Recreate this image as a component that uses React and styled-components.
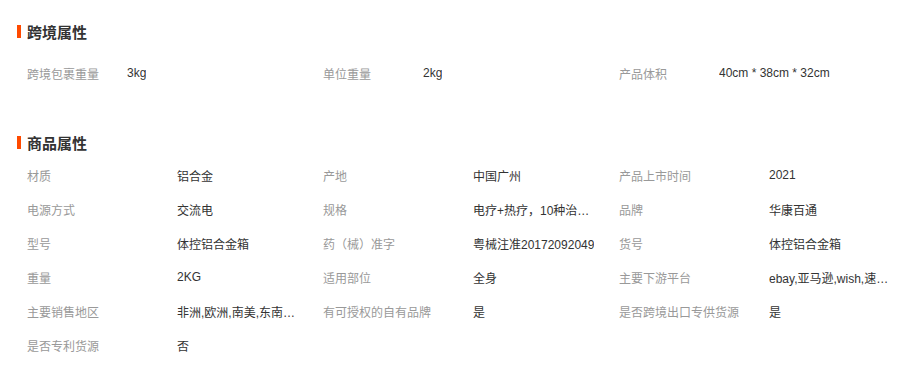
import React from 'react';
import styled, { createGlobalStyle } from 'styled-components';

const crossBorder = [
  ['跨境包裹重量', '3kg'],
  ['单位重量', '2kg'],
  ['产品体积', '40cm * 38cm * 32cm'],
];

const goods = [
  ['材质', '铝合金'],
  ['产地', '中国广州'],
  ['产品上市时间', '2021'],
  ['电源方式', '交流电'],
  ['规格', '电疗+热疗，10种治疗模式'],
  ['品牌', '华康百通'],
  ['型号', '体控铝合金箱'],
  ['药（械）准字', '粤械注准20172092049'],
  ['货号', '体控铝合金箱'],
  ['重量', '2KG'],
  ['适用部位', '全身'],
  ['主要下游平台', 'ebay,亚马逊,wish,速卖通'],
  ['主要销售地区', '非洲,欧洲,南美,东南亚,北美'],
  ['有可授权的自有品牌', '是'],
  ['是否跨境出口专供货源', '是'],
  ['是否专利货源', '否'],
];

const App = () => {
  return (
    <>
      <GlobalStyle />
      <Page>
        <Section>
          <Title>跨境属性</Title>
          <Grid top={15}>
            {crossBorder.map(([k, v]) => (
              <Cell key={k}>
                <Label width={100}>{k}</Label>
                <Value>{v}</Value>
              </Cell>
            ))}
          </Grid>
        </Section>
        <Section top={42}>
          <Title>商品属性</Title>
          <Grid top={6}>
            {goods.map(([k, v]) => (
              <Cell key={k}>
                <Label width={150}>{k}</Label>
                <Value limit>{v}</Value>
              </Cell>
            ))}
          </Grid>
        </Section>
      </Page>
    </>
  );
};

const GlobalStyle = createGlobalStyle`
  body {
    margin: 0;
    background: #fff;
    font-family: "Liberation Sans", "Noto Sans CJK SC", sans-serif;
  }
`;

const Page = styled.div`
  padding: 21px 0 0 17px;
`;

const Section = styled.div`
  margin-top: ${(p) => p.top || 0}px;
`;

const Title = styled.div`
  display: flex;
  align-items: center;
  gap: 6px;
  height: 20px;
  font-size: 15px;
  font-weight: bold;
  color: #333;

  &::before {
    content: '';
    width: 4px;
    height: 13px;
    background: #ff4a00;
  }
`;

const Grid = styled.div`
  display: grid;
  grid-template-columns: repeat(3, 296px);
  margin-top: ${(p) => p.top}px;
  padding-left: 10px;
`;

const Cell = styled.div`
  display: flex;
  align-items: center;
  height: 34px;
  font-size: 12px;
`;

const Label = styled.div`
  width: ${(p) => p.width}px;
  flex-shrink: 0;
  color: #999;
`;

const Value = styled.div`
  color: #333;
  white-space: nowrap;
  overflow: hidden;
  text-overflow: ellipsis;
  max-width: ${(p) => (p.limit ? '122px' : 'none')};
`;

export default App;
